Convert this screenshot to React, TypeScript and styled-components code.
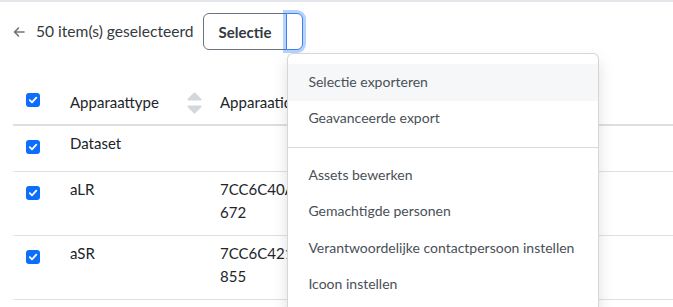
import React from "react";
import styled, { createGlobalStyle } from "styled-components";

const GlobalStyle = createGlobalStyle`
  html, body { margin: 0; padding: 0; background: #fff; }
  body {
    font-family: "Lato", "Noto Sans", sans-serif;
    font-size: 15px;
    color: #212529;
    -webkit-font-smoothing: antialiased;
  }
  * { box-sizing: border-box; }
`;

const Page = styled.div`
  position: relative;
  height: 307px;
  overflow: hidden;
  border-top: 2px solid #e2e6ea;
`;

const Toolbar = styled.div`
  display: flex;
  align-items: center;
  padding: 11px 13px 0;
  height: 48px;
`;

const BackButton = styled.span`
  display: inline-flex;
  align-items: center;
  color: #6c757d;
  width: 12px;
  height: 16px;
`;

const Count = styled.span`
  margin-left: 11px;
  color: #343a40;
  font-size: 15.6px;
  line-height: 23px;
`;

const ButtonGroup = styled.div`
  position: relative;
  display: flex;
  margin-left: 9px;
  height: 37px;
`;

const MainButton = styled.button`
  font: inherit;
  font-size: 15px;
  font-weight: 700;
  color: #343a40;
  background: #fff;
  border: 1px solid #6c757d;
  border-radius: 6px 0 0 6px;
  padding: 0 15px;
  height: 37px;
`;

const ToggleWrap = styled.div`
  position: relative;
  margin-left: -1px;
`;

const ToggleButton = styled.button`
  width: 17px;
  height: 37px;
  background: #fff;
  border: 1px solid #3d7ff0;
  border-radius: 0 6px 6px 0;
  box-shadow: 0 0 0 3px rgba(13, 110, 253, 0.3);
  padding: 0;
`;

const Menu = styled.ul`
  position: absolute;
  top: 40px;
  left: 1px;
  width: 312px;
  margin: 0;
  padding: 10px 0;
  list-style: none;
  background: #fff;
  border: 1px solid rgba(0, 0, 0, 0.16);
  border-radius: 6px;
  box-shadow: 0 8px 16px rgba(0, 0, 0, 0.13);
  z-index: 10;
`;

const MenuItem = styled.li<{ $active?: boolean }>`
  height: 36.5px;
  display: flex;
  align-items: center;
  padding: 0 20px 2px;
  font-size: 14px;
  color: #495057;
  background: ${(p) => (p.$active ? "#f6f7f8" : "transparent")};
  white-space: nowrap;
`;

const Divider = styled.li`
  height: 1px;
  margin: 10px 0 9px;
  background: #d6dadf;
`;

const Table = styled.table`
  margin: 29px 0 0 13px;
  width: calc(100% - 13px);
  border-collapse: collapse;
  table-layout: fixed;
`;

const HeadCell = styled.th<{ $w?: number; $pr?: number }>`
  width: ${(p) => (p.$w ? `${p.$w}px` : "auto")};
  text-align: left;
  font-weight: 400;
  vertical-align: bottom;
  padding: 7px ${(p) => p.$pr ?? 13}px 10px 13px;
  line-height: 23px;
  border-bottom: 2px solid #dce0e4;
  color: #212529;
  white-space: nowrap;
  overflow: hidden;
`;

const Cell = styled.td`
  vertical-align: top;
  padding: 6px 13px 11px;
  line-height: 23px;
  border-bottom: 1px solid #dee2e6;
  color: #212529;
`;

const CheckCell = styled(Cell)`
  padding-top: 7px;
  padding-bottom: 10px;
`;

const HeadInner = styled.div`
  display: flex;
  align-items: center;
  justify-content: space-between;
`;

const Check = styled.span`
  width: 14px;
  height: 14px;
  margin: 7px 0;
  border-radius: 3px;
  background: #0d6efd;
  color: #fff;
  display: flex;
  align-items: center;
  justify-content: center;
`;

const IdLine = styled.div`
  white-space: nowrap;
`;

const SortIcon = () => (
  <svg width="15" height="22" viewBox="0 0 15 22">
    <polygon points="7.5,1.5 13.5,7.5 1.5,7.5" fill="#d3d7dc" stroke="#d3d7dc" strokeWidth="2" strokeLinejoin="round" />
    <polygon points="1.5,14.5 13.5,14.5 7.5,20.5" fill="#d3d7dc" stroke="#d3d7dc" strokeWidth="2" strokeLinejoin="round" />
  </svg>
);

const CheckBox = () => (
  <Check>
    <svg width="10" height="10" viewBox="0 0 10 10">
      <path d="M1.8 5.2 L4 7.3 L8.3 2.6" fill="none" stroke="#fff" strokeWidth="1.8" strokeLinecap="round" strokeLinejoin="round" />
    </svg>
  </Check>
);

const rows = [
  { type: "Dataset", id: [] as string[] },
  { type: "aLR", id: ["7CC6C40A91B3F4E8", "672"] },
  { type: "aSR", id: ["7CC6C421D0B7E5A9", "855"] },
  { type: "aLR", id: ["7CC6C40B2E8F1A3C", "019"] },
];

export default function App() {
  return (
    <>
      <GlobalStyle />
      <Page>
        <Toolbar>
          <BackButton>
            <svg width="12" height="12" viewBox="0 0 12 12">
              <path d="M11 6 H1.5 M5.5 2 L1.5 6 L5.5 10" fill="none" stroke="currentColor" strokeWidth="1.6" strokeLinecap="round" strokeLinejoin="round" />
            </svg>
          </BackButton>
          <Count>50 item(s) geselecteerd</Count>
          <ButtonGroup>
            <MainButton>Selectie</MainButton>
            <ToggleWrap>
              <ToggleButton aria-label="Meer opties" />
              <Menu>
                <MenuItem $active>Selectie exporteren</MenuItem>
                <MenuItem>Geavanceerde export</MenuItem>
                <Divider />
                <MenuItem>Assets bewerken</MenuItem>
                <MenuItem>Gemachtigde personen</MenuItem>
                <MenuItem>Verantwoordelijke contactpersoon instellen</MenuItem>
                <MenuItem>Icoon instellen</MenuItem>
                <MenuItem>Verwijderen</MenuItem>
              </Menu>
            </ToggleWrap>
          </ButtonGroup>
        </Toolbar>
        <Table>
          <thead>
            <tr>
              <HeadCell $w={44}>
                <CheckBox />
              </HeadCell>
              <HeadCell $w={150} $pr={5}>
                <HeadInner>
                  Apparaattype
                  <SortIcon />
                </HeadInner>
              </HeadCell>
              <HeadCell>Apparaatidentificatie</HeadCell>
            </tr>
          </thead>
          <tbody>
            {rows.map((r, i) => (
              <tr key={i}>
                <CheckCell>
                  <CheckBox />
                </CheckCell>
                <Cell>{r.type}</Cell>
                <Cell>
                  {r.id.map((l) => (
                    <IdLine key={l}>{l}</IdLine>
                  ))}
                </Cell>
              </tr>
            ))}
          </tbody>
        </Table>
      </Page>
    </>
  );
}
